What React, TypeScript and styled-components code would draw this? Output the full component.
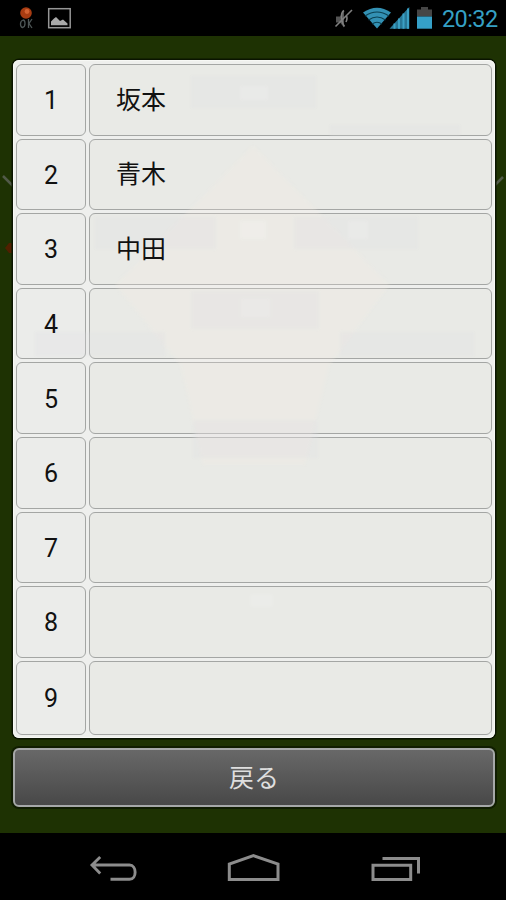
import React from "react";
import styled, { createGlobalStyle } from "styled-components";

const GlobalStyle = createGlobalStyle`
  * { box-sizing: border-box; }
  body { margin: 0; background: #000; }
`;

const Screen = styled.div`
  width: 506px;
  height: 900px;
  display: flex;
  flex-direction: column;
  overflow: hidden;
  background: #000;
  font-family: Roboto, "Noto Sans CJK JP", sans-serif;
`;

const StatusBar = styled.header`
  height: 36px;
  display: flex;
  justify-content: space-between;
`;

const Clock = styled.time`
  width: 64px;
  margin-left: 7px;
  font-size: 23.5px;
  line-height: 38px;
  letter-spacing: -0.6px;
  color: #35a0c4;
  white-space: nowrap;
`;

const StatusRight = styled.div`
  display: flex;
`;

const Field = styled.main`
  position: relative;
  height: 797px;
  padding: 24px 11px 0 13px;
  display: flex;
  flex-direction: column;
  gap: 10px;
  background: #1e3203;
`;

const FieldMarks = styled.svg`
  position: absolute;
  left: 0;
  top: 0;
`;

const Panel = styled.section`
  position: relative;
  height: 678px;
  padding: 4px 3px 3px;
  display: grid;
  grid-template-rows: repeat(8, 71.6px) 1fr;
  row-gap: 3px;
  border-radius: 6px;
  background: #eeefed;
  box-shadow: 0 0 0 1.5px #0a1400, inset 0 0 1px 1px #f8f9f5;
`;

const PlayerRow = styled.div`
  display: grid;
  grid-template-columns: 70px 1fr;
  column-gap: 3px;
`;

const Cell = styled.div<{ $name?: boolean }>`
  display: flex;
  align-items: center;
  justify-content: ${(p) => (p.$name ? "flex-start" : "center")};
  padding: ${(p) => (p.$name ? "2px 0 0 26px" : "3px 0 0")};
  border: 1.5px solid #a4a6a4;
  border-radius: 6px;
  background: ${(p) => (p.$name ? "#e9eae6" : "#ebecea")};
  color: #111;
  font-size: 25px;
  line-height: 30px;
`;

const Label = styled.span`
  position: relative;
  z-index: 1;
`;

const Ghosts = styled.svg`
  position: absolute;
  left: 0;
  top: 0;
  filter: blur(1.5px);
  pointer-events: none;
`;

const BackButton = styled.button`
  position: relative;
  height: 59px;
  padding: 0 0 4px;
  border: 2px solid #a6a8a9;
  border-radius: 6px;
  background: linear-gradient(#686868, #484848);
  box-shadow: 0 0 0 2px #101d01;
  color: #dedede;
  font-family: "Noto Sans CJK JP", sans-serif;
  font-size: 25px;
  line-height: 30px;
`;

const NavBar = styled.nav`
  height: 67px;
`;

const players = ["坂本", "青木", "中田", "", "", "", "", "", ""];

const NotificationIcons = () => (
  <svg width="90" height="36" viewBox="0 0 90 36">
    <circle cx="26" cy="13" r="5.8" fill="#a83c12" />
    <circle cx="27" cy="11.5" r="2.4" fill="#d36232" />
    <path d="M23 20q-2.500 1-2.500 4t2 3.500q2.500-.5 2.500-4t-2-3.500M28.500 19v9M32 19l-3 4.500 3 4.500" fill="none" stroke="#4d5555" strokeWidth="1.3" />
    <rect x="48.700" y="8.700" width="21.500" height="19" fill="none" stroke="#969696" strokeWidth="1.500" />
    <path d="M51 25.200v-3.700l3-3 2-1.500 4 4 3-1.500 4.500 4v1.700z" fill="#a9a9a9" />
  </svg>
);

const SystemIcons = () => (
  <svg width="102" height="36" viewBox="334 0 102 36">
    <path d="M337 16.500h4l4-6v17l-4-5h-4z" fill="#555" />
    <path d="M345 10.500q-3 2-2.500 7.500t3 8.500M336.500 26.500L353 10M347 15q2 3 0 7" fill="none" stroke="#808080" strokeWidth="1.600" />
    <path d="M364 12.500q14-9.500 28 0L378 28.500z" fill="#3391b4" />
    <path d="M366 16q12-8 24 0M369.500 20q8.500-6 17 0M373 24q5-3.500 10 0" fill="none" stroke="#0b4052" strokeWidth="1.100" />
    <path d="M390.500 28.700L410.300 7v21.700z" fill="#277796" />
    <path d="M409 8.500v20.200M404.500 13.500v15.200M400 18.500v10.200M395.500 23.500v5.200" stroke="#3ba0c4" strokeWidth="2" />
    <path d="M418 16.500V9.500h4V7h7v2.500h4v7z" fill="#464646" />
    <path d="M418 16.500h15V28.700h-15z" fill="#35a0c8" />
  </svg>
);

const NavIcons = () => (
  <svg width="506" height="67" viewBox="0 833 506 67" fill="none" stroke="#8c8c8c">
    <path d="M92 865h37.500c7.500 0 7.500 14.300 0 14.300H110.500M100.200 857L92 865l8.200 8.500" strokeWidth="2.900" />
    <path d="M229.300 879.500V864l24.200-8.300L278 864v15.500z" strokeWidth="3" />
    <path d="M373 865.300h37.700v14.200H373zM382.500 858.500h36v15" strokeWidth="3" />
  </svg>
);

const PanelGhosts = () => (
  <Ghosts width="482" height="678" viewBox="13 60 482 678">
    <path d="M253 145L390 285 330 365 305 465H203L180 365 115 285z" fill="#f5ebe4" opacity=".22" />
    <g fill="#dedce0" opacity=".24">
      <rect x="191" y="76" width="125" height="32" />
      <rect x="330" y="125" width="130" height="12" />
      <rect x="95" y="217" width="121" height="32" />
      <rect x="294" y="217" width="124" height="32" />
      <rect x="191" y="291" width="128" height="38" />
      <rect x="35" y="332" width="130" height="24" />
      <rect x="340" y="332" width="134" height="24" />
      <rect x="193" y="420" width="125" height="38" />
    </g>
    <g fill="#fff" opacity=".12">
      <rect x="240" y="86" width="28" height="14" />
      <rect x="240" y="221" width="26" height="18" />
      <rect x="348" y="221" width="20" height="18" />
      <rect x="241" y="299" width="29" height="18" />
      <rect x="250" y="594" width="23" height="13" />
    </g>
  </Ghosts>
);

export default function App() {
  return (
    <Screen>
      <GlobalStyle />
      <StatusBar>
        <NotificationIcons />
        <StatusRight>
          <SystemIcons />
          <Clock>20:32</Clock>
        </StatusRight>
      </StatusBar>
      <Field>
        <FieldMarks width="506" height="797" viewBox="0 36 506 797">
          <path d="M3 176l10 10M494 186l9-9" stroke="#525a49" strokeWidth="2.500" />
          <path d="M5 248l4-5h4v10H9z" fill="#661800" opacity=".7" />
        </FieldMarks>
        <Panel>
          {players.map((name, i) => (
            <PlayerRow key={i}>
              <Cell>
                <Label>{i + 1}</Label>
              </Cell>
              <Cell $name>
                <Label>{name}</Label>
              </Cell>
            </PlayerRow>
          ))}
          <PanelGhosts />
        </Panel>
        <BackButton>戻る</BackButton>
      </Field>
      <NavBar>
        <NavIcons />
      </NavBar>
    </Screen>
  );
}
